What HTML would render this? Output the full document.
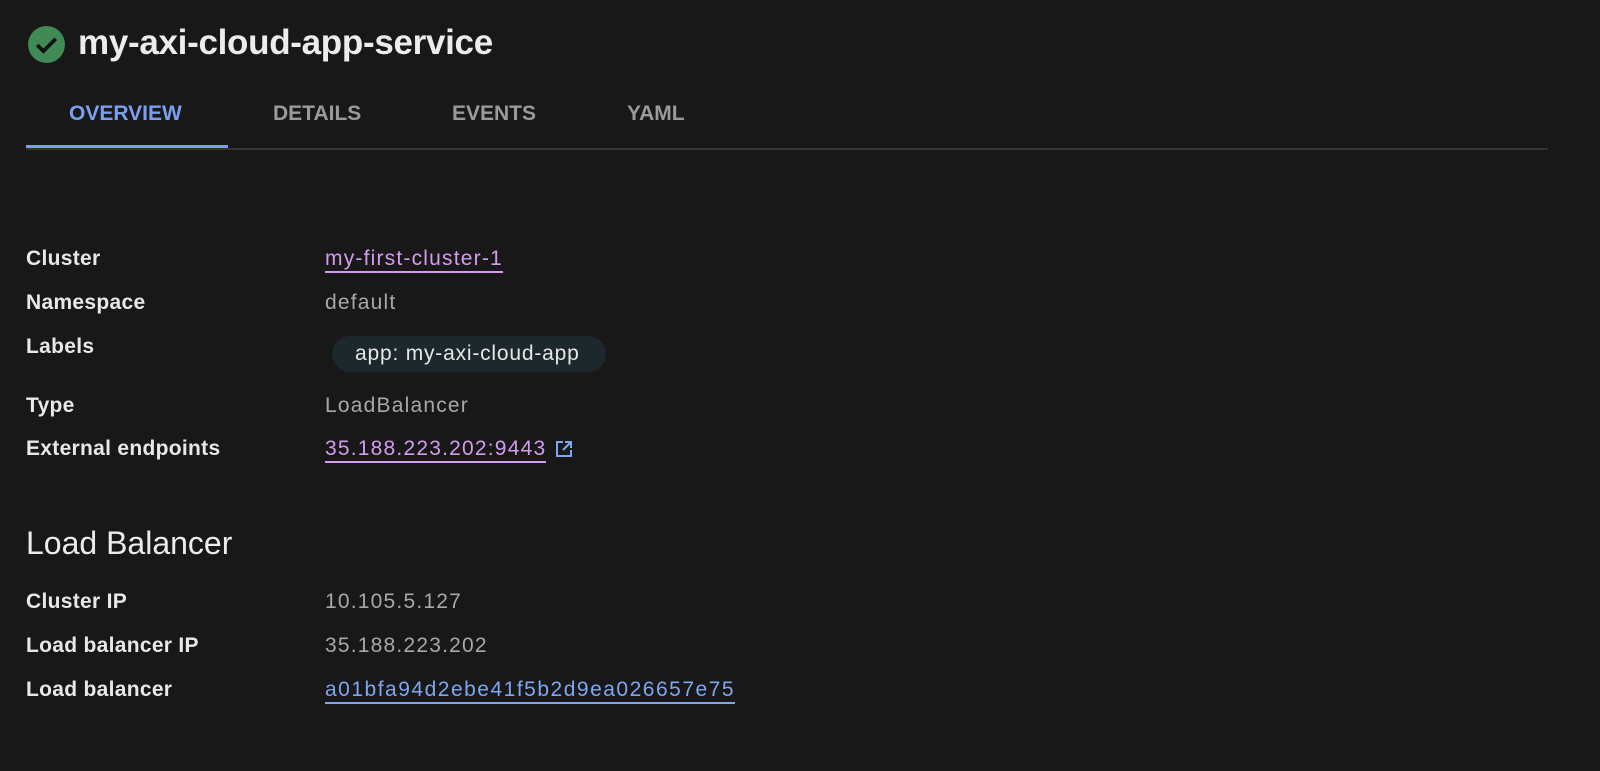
<!DOCTYPE html>
<html><head><style>
body{margin:0;background:#181818;width:1600px;height:771px;overflow:hidden;font-family:"Liberation Sans",sans-serif;position:relative}
.a{position:absolute;white-space:nowrap}
.t{font-size:35px;font-weight:bold;color:#ececec;left:78px;top:23px;letter-spacing:-0.3px}
.tab{font-size:21px;font-weight:bold;color:#9a9a9a;top:102px}
.l{left:26px;font-size:21px;font-weight:bold;color:#e8e8e8;letter-spacing:0.3px}
.v{left:325px;font-size:21px;color:#a8a8a8;letter-spacing:1.2px}
.lk{color:#d39cf0;border-bottom:2px solid #d39cf0;padding-bottom:1px}
.bl{color:#7fa6f0;border-bottom:2px solid #7fa6f0;padding-bottom:1px}
</style></head><body>
<svg class="a" style="left:28px;top:26px" width="37" height="37" viewBox="0 0 36 36"><circle cx="18" cy="18" r="18" fill="#3f8a55"/><path d="M9 18.5l6 6 12-12" stroke="#111" stroke-width="3.6" fill="none"/></svg>
<div class="a t">my-axi-cloud-app-service</div>
<div class="a tab" style="left:69px;color:#7b9ff0">OVERVIEW</div>
<div class="a tab" style="left:273px">DETAILS</div>
<div class="a tab" style="left:452px">EVENTS</div>
<div class="a tab" style="left:627px">YAML</div>
<div class="a" style="left:26px;top:148px;width:1522px;height:2px;background:#333"></div>
<div class="a" style="left:26px;top:145px;width:202px;height:3px;background:#7b9ff0"></div>

<div class="a l" style="top:247px">Cluster</div><div class="a v" style="top:247px"><span class="lk">my-first-cluster-1</span></div>
<div class="a l" style="top:291px">Namespace</div><div class="a v" style="top:291px">default</div>
<div class="a l" style="top:335px">Labels</div>
<div class="a" style="left:332px;top:336px;width:274px;height:36px;border-radius:18px;background:#1d282d"></div>
<div class="a" style="left:355px;top:342px;font-size:21px;letter-spacing:0.8px;color:#e6e6e6">app: my-axi-cloud-app</div>
<div class="a l" style="top:394px">Type</div><div class="a v" style="top:394px">LoadBalancer</div>
<div class="a l" style="top:437px">External endpoints</div><div class="a v" style="top:437px"><span class="lk">35.188.223.202:9443</span></div>
<svg class="a" style="left:555px;top:440px" width="18" height="18" viewBox="0 0 18 18" fill="none" stroke="#7fa6f0" stroke-width="2"><path d="M8 2H2v14h14v-6M10 2h6v6M16 2L8 10"/></svg>

<div class="a" style="left:26px;top:525px;font-size:32px;color:#ececec">Load Balancer</div>
<div class="a l" style="top:590px">Cluster IP</div><div class="a v" style="top:590px">10.105.5.127</div>
<div class="a l" style="top:634px">Load balancer IP</div><div class="a v" style="top:634px">35.188.223.202</div>
<div class="a l" style="top:678px">Load balancer</div><div class="a v" style="top:678px;letter-spacing:1.5px"><span class="bl">a01bfa94d2ebe41f5b2d9ea026657e75</span></div>
</body></html>
